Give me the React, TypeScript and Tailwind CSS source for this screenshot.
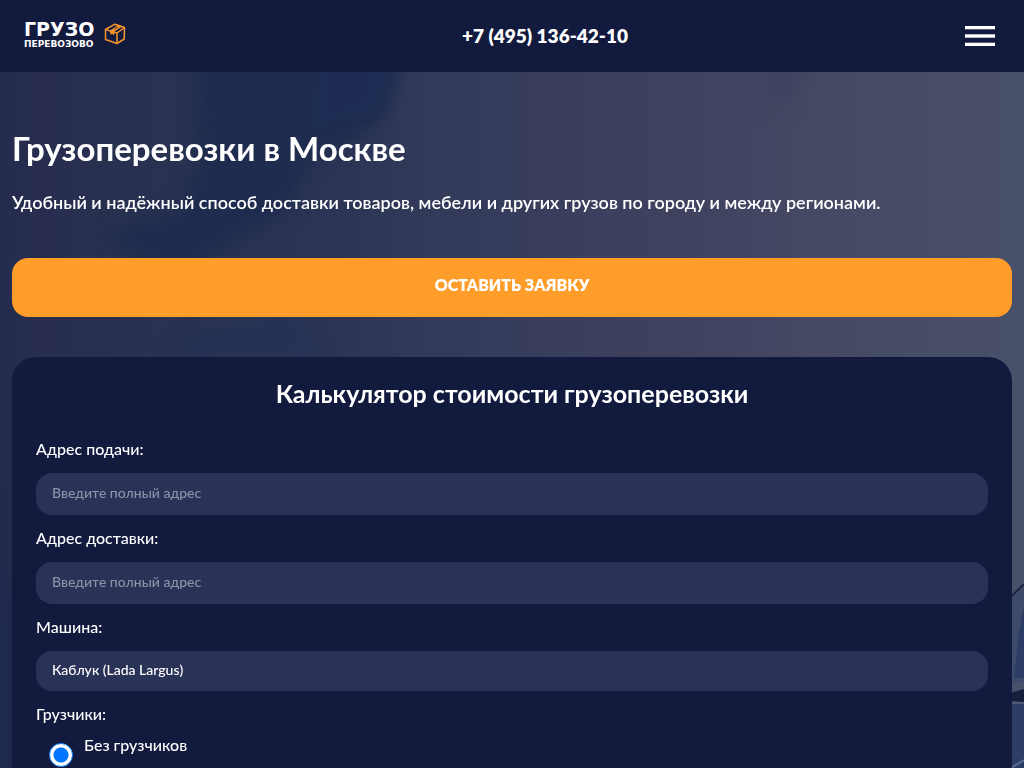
import React from 'react';

const BoxIcon: React.FC = () => (
  <svg viewBox="0 0 22 22" className="h-[22px] w-[22px]" fill="none" stroke="#f7962a" strokeLinejoin="round" aria-hidden="true">
    <path d="M1.500 6.500 11 1.200l9.500 3.300-.3 11.500L13 20.500 1.500 16.500z" strokeWidth="1.500" />
    <path d="M1.500 6.500 13 10l7.500-5.500M13 10v10.500" strokeWidth="1.500" />
    <path d="m6.500 7.500 7.500-5 3.500 1.200L10 8.500v3.500L8.200 10.600 6.500 11.300z" fill="#f7962a" strokeWidth="0.500" />
    <path d="m10 6.500 4-2.500" stroke="#121a3e" strokeWidth="0.700" />
  </svg>
);

const HeroBackdrop: React.FC = () => (
  <svg
    className="absolute inset-0 h-full w-full"
    viewBox="0 0 1024 696"
    preserveAspectRatio="none"
    aria-hidden="true"
  >
    <defs>
      <linearGradient id="sky" x1="0" x2="1" y1="0" y2="0">
        <stop offset="0" stopColor="#242c4e" />
        <stop offset="0.040" stopColor="#282d4f" />
        <stop offset="0.120" stopColor="#283150" />
        <stop offset="0.320" stopColor="#2b3454" />
        <stop offset="0.430" stopColor="#333a5a" />
        <stop offset="0.560" stopColor="#3a3f5d" />
        <stop offset="0.660" stopColor="#3f425f" />
        <stop offset="0.800" stopColor="#454964" />
        <stop offset="1" stopColor="#49506a" />
      </linearGradient>
      <linearGradient id="shade" x1="0" x2="0" y1="0" y2="1">
        <stop offset="0.400" stopColor="#1b274c" stopOpacity="0" />
        <stop offset="0.800" stopColor="#1b274c" stopOpacity="0.500" />
      </linearGradient>
      <filter id="soft" x="-20%" y="-20%" width="140%" height="140%" colorInterpolationFilters="sRGB">
        <feGaussianBlur stdDeviation="9" />
      </filter>
      <filter id="edge" x="-20%" y="-20%" width="140%" height="140%" colorInterpolationFilters="sRGB">
        <feGaussianBlur stdDeviation="3" />
      </filter>
    </defs>
    <rect width="1024" height="696" fill="url(#sky)" />
    <rect width="500" height="696" fill="url(#shade)" />
    <g filter="url(#soft)">
      <path d="M195-20H390L380 55 310 90 285 140 240 165 180 200 120 175 110 160 180 140 200 90z" fill="#1e2b4f" opacity="0.900" />
      <path d="M190 265 300 240 320 285H170z" fill="#22305a" opacity="0.500" />
      <path d="M765-10h45l-20 40-20 10z" fill="#3b405b" opacity="0.600" />
    </g>
    <path d="M320-20h80V5L388 40 350 45 310 60z" fill="#1f2e54" opacity="0.800" filter="url(#edge)" />
    {/* windscreen and mirror of the truck */}
    <path d="M1010 530 1024 514V610H1010z" fill="#3e4a6a" />
    <path d="M1019 560 1024 535V606H1014z" fill="#2b3c65" />
    <path d="M1010 526 1024 512" stroke="#1a2547" strokeWidth="2" />
    <path d="M1010 621 1024 617v13l-14-1z" fill="#151e3b" />
    <path d="M1010 632H1024V696H1010z" fill="#2e3d63" />
    <path d="M1010 631H1024" stroke="#59627e" />
    <path d="m1011 696 13-8" stroke="#54709a" strokeWidth="2" />
  </svg>
);

const labelClass = 'mb-3 block text-[16px] leading-6 font-medium';
const fieldClass = 'block w-full rounded-[16px] bg-[#2b3257] px-4 pb-[3px] text-[14px] font-medium outline-none placeholder:text-[#8d91a8] placeholder:opacity-100';

const addresses = [
  { id: 'from', label: 'Адрес подачи:' },
  { id: 'to', label: 'Адрес доставки:' },
];

const App: React.FC = () => {
  return (
    <div className="flex min-h-screen flex-col bg-[#252c4e] font-['Lato','Noto_Sans',sans-serif] text-white">
      <header className="flex h-[72px] items-center justify-between bg-[#121a3e] pr-7 pl-6">
        <a href="#" className="flex items-center gap-1 pb-1 font-['DejaVu_Sans',sans-serif] font-bold">
          <span className="w-[76px]">
            <span className="block text-[19px] leading-[20px]">ГРУЗО</span>
            <span className="block text-[9px] leading-[10px]">ПЕРЕВОЗОВО</span>
          </span>
          <BoxIcon />
        </a>
        <a href="tel:+74951364210" className="text-[19px] font-extrabold whitespace-nowrap">
          +7 (495) 136-42-10
        </a>
        <button type="button" aria-label="Меню">
          <svg viewBox="0 0 32 20" className="h-5 w-8" fill="#fff" aria-hidden="true">
            <rect x="1" width="30" height="3.300" />
            <rect x="1" y="8.300" width="30" height="3.400" />
            <rect x="1" y="16.700" width="30" height="3.300" />
          </svg>
        </button>
      </header>

      <main className="relative flex flex-1 flex-col px-3 pt-[54px]">
        <HeroBackdrop />
        <div className="relative flex flex-1 flex-col">
          <h1 className="text-[33px] leading-[44px] font-bold">Грузоперевозки в Москве</h1>
          <p className="mt-[18px] text-[18px] leading-7 font-semibold">
            Удобный и надёжный способ доставки товаров, мебели и других грузов по городу и между регионами.
          </p>
          <button type="button" className="mt-[42px] h-[59px] w-full rounded-[16px] bg-[#ff9d2b] pb-[5px] text-[16px] font-extrabold uppercase">
            Оставить заявку
          </button>

          <form className="mt-10 flex-1 rounded-t-[24px] bg-[#121a3e] px-6 pt-5">
            <h2 className="mb-7 text-center text-[25px] leading-8 font-bold">Калькулятор стоимости грузоперевозки</h2>
            {addresses.map((item) => (
              <div key={item.id} className="mb-[11px]">
                <label htmlFor={item.id} className={labelClass}>{item.label}</label>
                <input id={item.id} type="text" placeholder="Введите полный адрес" className={`${fieldClass} h-[42px]`} />
              </div>
            ))}
            <div className="mb-[11px]">
              <label htmlFor="car" className={labelClass}>Машина:</label>
              <select id="car" className={`${fieldClass} h-10 appearance-none`}>
                <option>Каблук (Lada Largus)</option>
              </select>
            </div>
            <fieldset>
              <legend className="mb-[7px] text-[16px] leading-6 font-medium">Грузчики:</legend>
              <div className="flex items-start gap-[11px] pl-[13px]">
                <span className="flex pt-[10px]">
                  <input
                    id="no-loaders"
                    type="radio"
                    name="loaders"
                    defaultChecked
                    className="h-6 w-6 appearance-none rounded-full border border-[#0075ff] bg-white checked:bg-[radial-gradient(circle,#0075ff_7px,#fff_8px)]"
                  />
                </span>
                <label htmlFor="no-loaders" className="text-[16px] leading-6 font-medium">Без грузчиков</label>
              </div>
            </fieldset>
          </form>
        </div>
      </main>
    </div>
  );
};

export default App;
